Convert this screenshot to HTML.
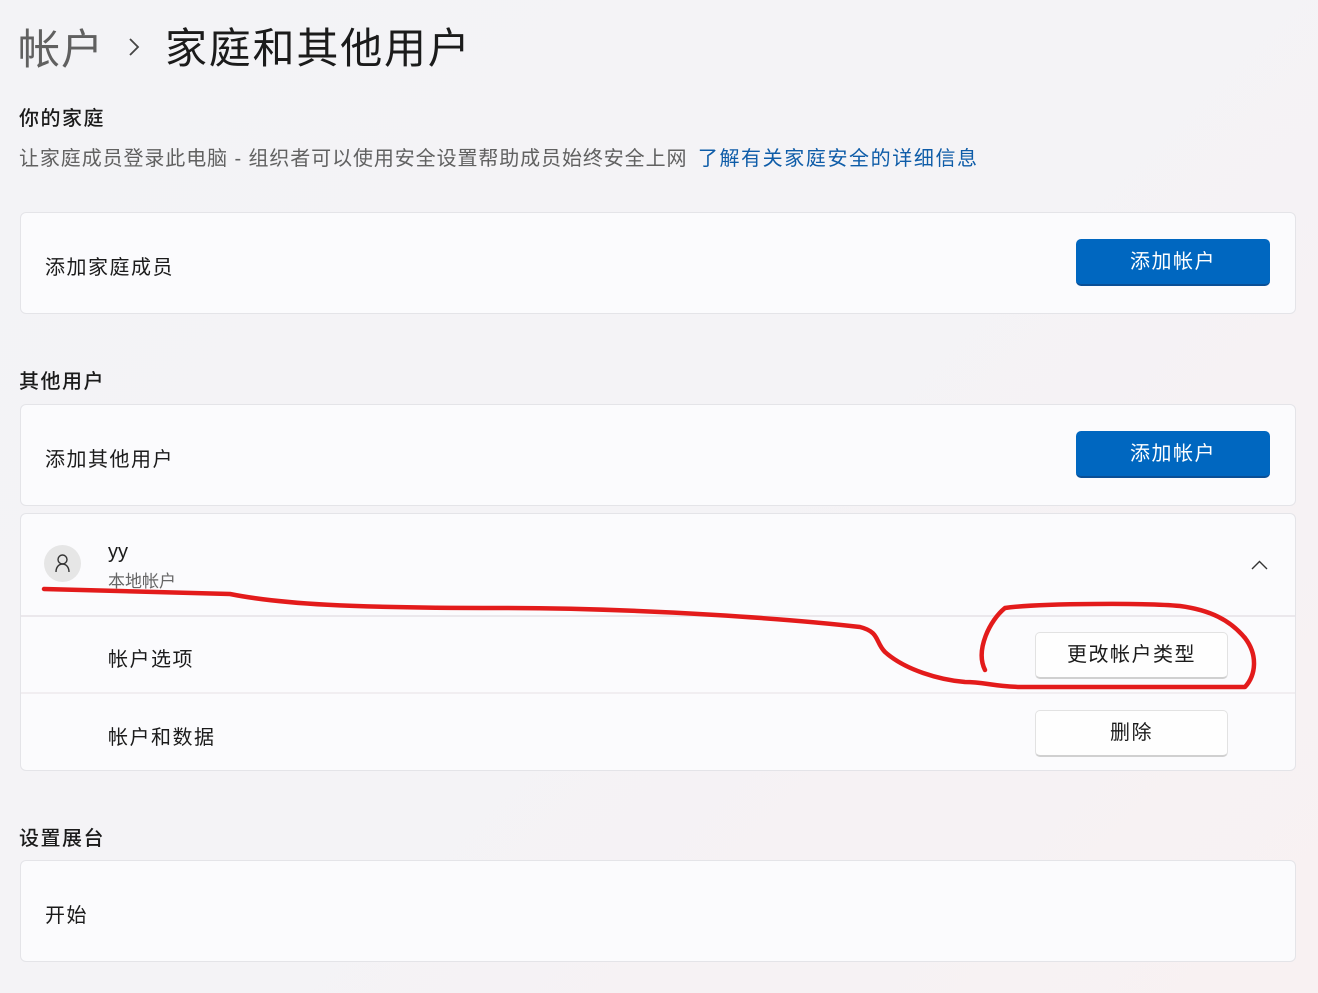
<!DOCTYPE html>
<html><head><meta charset="utf-8"><style>
*{margin:0;padding:0;box-sizing:border-box}
body{width:1318px;height:993px;overflow:hidden;background:linear-gradient(135deg,#f3f3f6 0%,#f4f3f6 50%,#f8f1f2 100%);font-family:"Liberation Sans","Noto Sans CJK SC",sans-serif;color:#1b1b1b;position:relative;letter-spacing:1.5px}
.a{position:absolute;white-space:nowrap}
.card{position:absolute;left:20px;width:1276px;background:#fbfbfd;border:1px solid #e4e4e8;border-radius:6px}
.t{font-size:20px}
.btn{position:absolute;border-radius:5px;font-size:20px;text-align:center}
.blue{background:#0067c0;color:#fff;border-bottom:2px solid #0a4f96}
.wht{background:#fefefe;border:1px solid #e2e2e2;border-bottom:2px solid #d0d0d0;color:#1b1b1b}
h3{position:absolute;font-size:20px;font-weight:500;letter-spacing:1.5px}
</style></head><body>
<div class="a" style="left:18px;top:16px;font-size:42px;color:#606060;letter-spacing:1px">帐户</div>
<svg class="a" style="left:126px;top:36px" width="16" height="22"><path d="M4 3l8 8-8 8" fill="none" stroke="#444" stroke-width="1.8"/></svg>
<div class="a" style="left:165px;top:15px;font-size:42px;color:#1b1b1b;letter-spacing:1.8px">家庭和其他用户</div>
<h3 style="left:19px;top:102px">你的家庭</h3>
<div class="a" style="left:19px;top:142px;font-size:20px;color:#616161;letter-spacing:0.9px">让家庭成员登录此电脑 - 组织者可以使用安全设置帮助成员始终安全上网 <span style="color:#0e5ca8;margin-left:4px;letter-spacing:1.6px">了解有关家庭安全的详细信息</span></div>

<div class="card" style="top:212px;height:102px"></div>
<div class="a t" style="left:45px;top:251px">添加家庭成员</div>
<div class="btn blue" style="left:1076px;top:239px;width:194px;height:47px;line-height:47px">添加帐户</div>

<h3 style="left:19px;top:365px">其他用户</h3>
<div class="card" style="top:404px;height:102px"></div>
<div class="a t" style="left:45px;top:443px">添加其他用户</div>
<div class="btn blue" style="left:1076px;top:431px;width:194px;height:47px;line-height:47px">添加帐户</div>

<div class="card" style="top:513px;height:258px"></div>
<div class="a" style="left:21px;top:615px;width:1274px;height:2px;background:#ebe8ec"></div>
<div class="a" style="left:21px;top:692px;width:1274px;height:2px;background:#f1eef1"></div>
<div class="a" style="left:44px;top:545px;width:37px;height:37px;border-radius:50%;background:#e6e6e6"></div>
<svg class="a" style="left:44px;top:545px" width="37" height="37"><circle cx="18.5" cy="14.5" r="4.5" fill="none" stroke="#333" stroke-width="1.4"/><path d="M12 27c0-5 3-8 6.5-8s6.5 3 6.5 8" fill="none" stroke="#333" stroke-width="1.4"/></svg>
<div class="a" style="left:108px;top:541px;font-size:20px;letter-spacing:0">yy</div>
<div class="a" style="left:108px;top:567px;font-size:17px;color:#666;letter-spacing:0">本地帐户</div>
<svg class="a" style="left:1250px;top:558px" width="20" height="14"><path d="M2 11L9.5 3.5 17 11" fill="none" stroke="#333" stroke-width="1.4"/></svg>
<div class="a t" style="left:108px;top:643px">帐户选项</div>
<div class="a t" style="left:108px;top:721px">帐户和数据</div>
<div class="btn wht" style="left:1035px;top:632px;width:193px;height:47px;line-height:45px">更改帐户类型</div>
<div class="btn wht" style="left:1035px;top:710px;width:193px;height:47px;line-height:45px">删除</div>

<h3 style="left:19px;top:822px">设置展台</h3>
<div class="card" style="top:860px;height:102px"></div>
<div class="a t" style="left:45px;top:899px">开始</div>

<svg class="a" style="left:0;top:0" width="1318" height="993"><path d="M44 589 L230 594 C280 604 350 608 500 608 C650 608 800 620 860 627 C880 632 875 642 885 652 C905 670 940 680 965 682 C985 682 990 686 1020 687 L1245 687 C1256 675 1258 655 1245 638 C1230 620 1210 610 1180 606 C1150 603 1040 603 1005 608 C990 620 975 650 985 670" fill="none" stroke="#e31b1b" stroke-width="4.5" stroke-linecap="round" stroke-linejoin="round"/></svg>
</body></html>
